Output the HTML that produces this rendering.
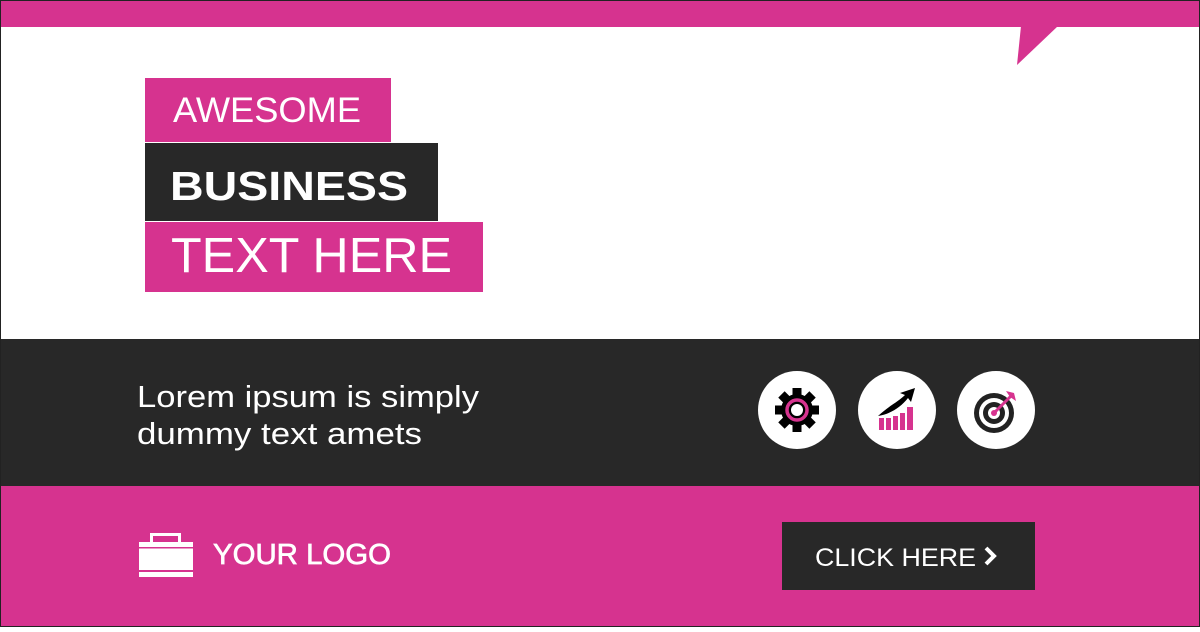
<!DOCTYPE html>
<html><head><meta charset="utf-8"><style>
html,body{margin:0;padding:0}
body{width:1200px;height:627px;overflow:hidden;background:#fff}
</style></head><body>
<svg width="1200" height="627" viewBox="0 0 1200 627" xmlns="http://www.w3.org/2000/svg" font-family="Liberation Sans, sans-serif">
<rect x="0" y="0" width="1200" height="627" fill="#fff"/>
<rect x="0" y="0" width="1200" height="27" fill="#d6338f"/>
<polygon points="1021,26 1058,26 1017,65" fill="#d6338f"/>
<rect x="145" y="78" width="246" height="64" fill="#d6338f"/>
<rect x="145" y="143" width="293" height="78" fill="#282828"/>
<rect x="145" y="222" width="338" height="70" fill="#d6338f"/>
<text x="173" y="122" font-size="35" fill="#fff" textLength="188" lengthAdjust="spacingAndGlyphs">AWESOME</text>
<text x="170" y="200" font-size="41" font-weight="bold" fill="#fff" textLength="238" lengthAdjust="spacingAndGlyphs">BUSINESS</text>
<text x="171" y="272" font-size="49" fill="#fff" textLength="281" lengthAdjust="spacingAndGlyphs">TEXT HERE</text>
<rect x="0" y="339" width="1200" height="147" fill="#282828"/>
<text x="137" y="407" font-size="31" fill="#fff" textLength="342" lengthAdjust="spacingAndGlyphs">Lorem ipsum is simply</text>
<text x="137" y="444" font-size="31" fill="#fff" textLength="285" lengthAdjust="spacingAndGlyphs">dummy text amets</text>
<circle cx="797" cy="410" r="39" fill="#fff"/>
<circle cx="897" cy="410" r="39" fill="#fff"/>
<circle cx="996" cy="410" r="39" fill="#fff"/>
<g transform="translate(797,410)">
<g fill="#000">
<circle r="16"/>
<rect x="-4.5" y="-22" width="9" height="44"/>
<rect x="-4.5" y="-22" width="9" height="44" transform="rotate(45)"/>
<rect x="-4.5" y="-22" width="9" height="44" transform="rotate(90)"/>
<rect x="-4.5" y="-22" width="9" height="44" transform="rotate(135)"/>
</g>
<circle r="10" fill="none" stroke="#d6338f" stroke-width="3.5"/>
<circle r="6" fill="#fff"/>
</g>
<g fill="#d6338f">
<rect x="879" y="418" width="5" height="12"/>
<rect x="886" y="418" width="5" height="12"/>
<rect x="893" y="416" width="5" height="14"/>
<rect x="900" y="413" width="5" height="17"/>
<rect x="907" y="407" width="6" height="23"/>
</g>
<path d="M878,416 C890,405 898,402 905,395 L900,393 L915,388 L911,402 L908,398 C900,408 890,414 878,416 Z" fill="#000"/>
<g transform="translate(994,413)">
<circle r="20" fill="#222"/>
<circle r="15" fill="#fff"/>
<circle r="11" fill="#222"/>
<circle r="6" fill="#fff"/>
<circle r="3" fill="#d6338f"/>
<path d="M0,0 L18,-18" stroke="#d6338f" stroke-width="3"/>
<path d="M12,-22 L20,-20 L22,-12 L16,-16Z" fill="#d6338f"/>
</g>
<rect x="0" y="486" width="1200" height="141" fill="#d6338f"/>
<g fill="#fff">
<rect x="150" y="533" width="3" height="9"/>
<rect x="178" y="533" width="3" height="9"/>
<rect x="150" y="533" width="31" height="3"/>
<rect x="139" y="542" width="54" height="35"/>
</g>
<rect x="139" y="547" width="54" height="1.5" fill="#d6338f"/>
<rect x="139" y="570" width="54" height="2" fill="#d6338f"/>
<text x="213" y="564" font-size="29" fill="#fff" stroke="#fff" stroke-width="0.7" textLength="178" lengthAdjust="spacingAndGlyphs">YOUR LOGO</text>
<rect x="782" y="522" width="253" height="68" fill="#282828"/>
<text x="815" y="566" font-size="25" fill="#fff" textLength="161" lengthAdjust="spacingAndGlyphs">CLICK HERE</text>
<path d="M986,548 L994,556 L986,564" fill="none" stroke="#fff" stroke-width="4"/>
<rect x="0.5" y="0.5" width="1199" height="626" fill="none" stroke="#222" stroke-width="1"/>
</svg>
</body></html>
